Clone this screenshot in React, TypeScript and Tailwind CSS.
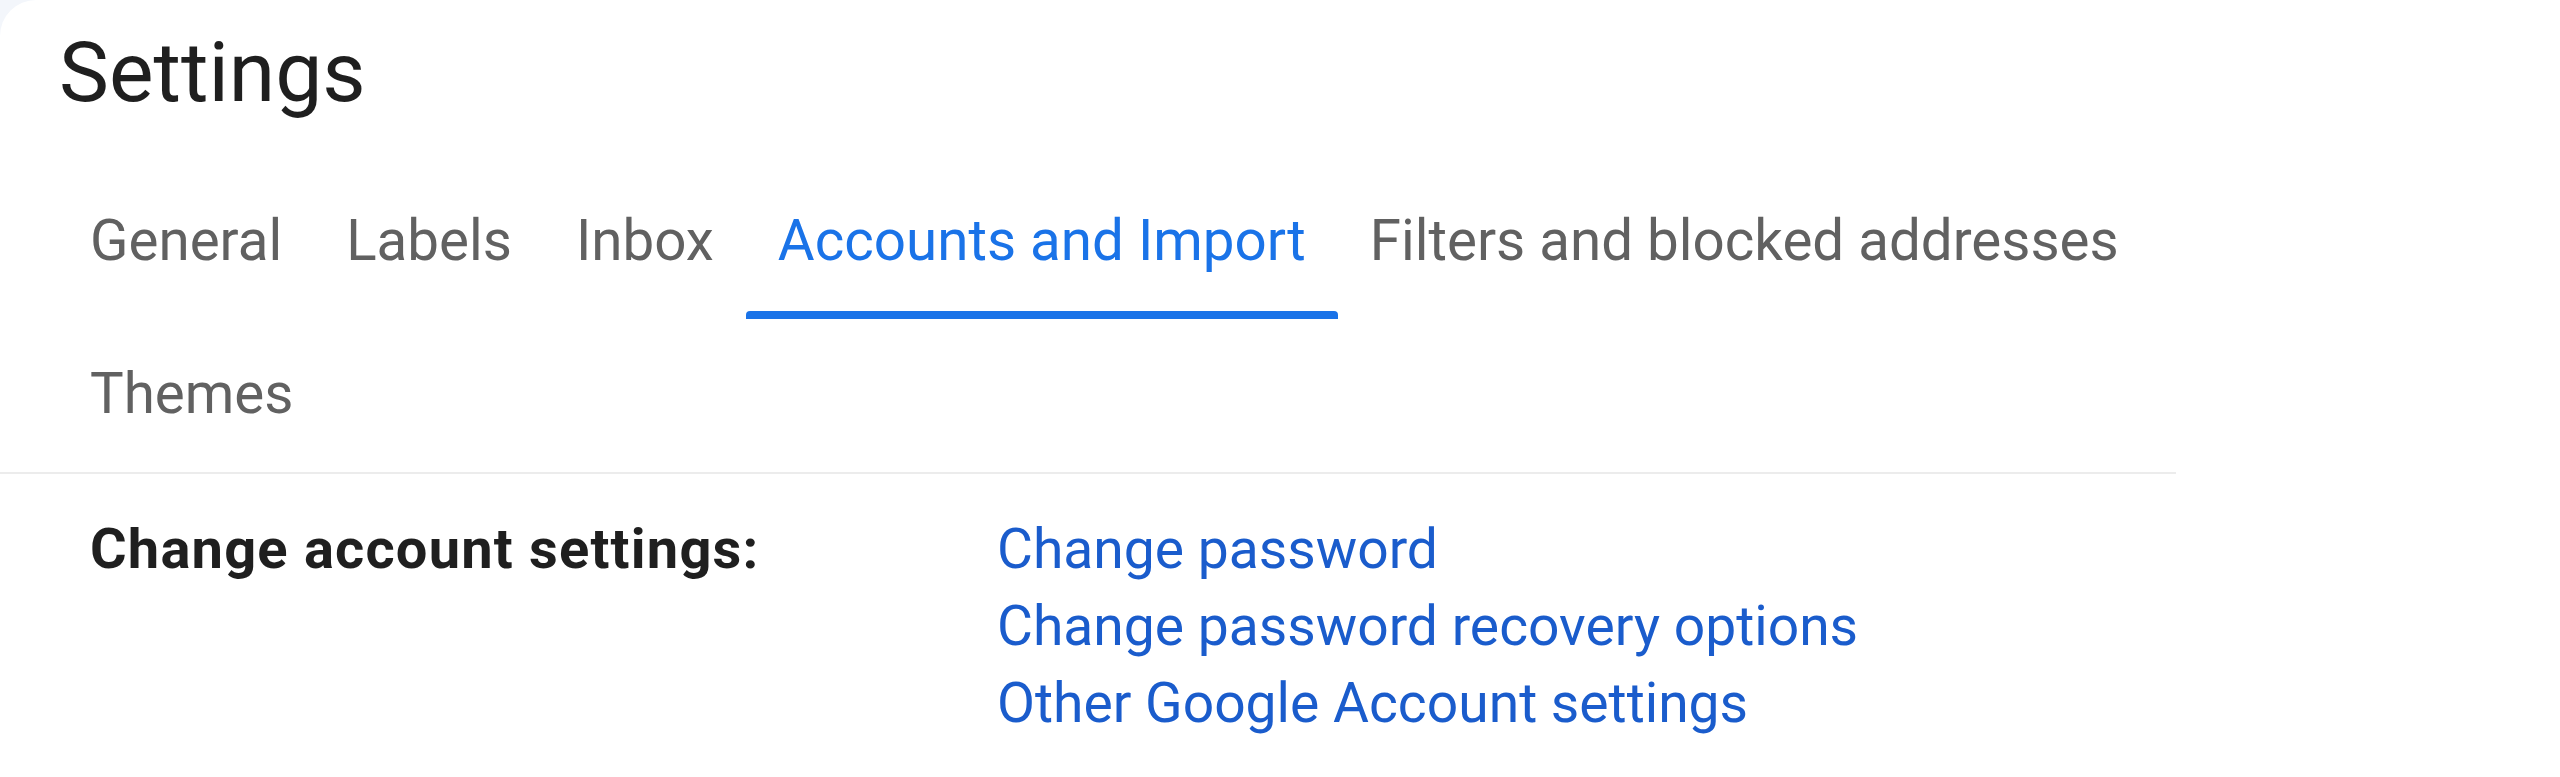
import React from 'react'

const tabRows = [
  ['General', 'Labels', 'Inbox', 'Accounts and Import', 'Filters and blocked addresses'],
  ['Themes'],
]

const links = [
  'Change password',
  'Change password recovery options',
  'Other Google Account settings',
]

export default function App() {
  return (
    <div className="min-h-[777px] w-[2560px] bg-[#f3f6fb] font-['Roboto',sans-serif]">
      <div className="min-h-[777px] bg-white rounded-tl-[36px]">
        {/* Header */}
        <h1 className="pt-[31px] pl-[59px] text-[84px] leading-none font-normal text-[#1f1f1f]">
          Settings
        </h1>

        {/* Tabs */}
        <div className="mt-[51px] w-[2176px] border-b-2 border-[#ececec]">
          {tabRows.map((row, i) => (
            <div key={i} className="flex pl-[58px]">
              {row.map((tab) => {
                const active = tab === 'Accounts and Import'
                return (
                  <div
                    key={tab}
                    className={
                      'relative flex h-[153px] items-center px-[32px] pb-[2px] text-[56.5px] leading-none ' +
                      (active ? 'text-[#1a73e8]' : 'text-[#616161]')
                    }
                  >
                    {tab}
                    {active && (
                      <span className="absolute bottom-0 left-0 right-0 h-[8px] rounded-t-[4px] bg-[#1a73e8]" />
                    )}
                  </div>
                )
              })}
            </div>
          ))}
        </div>

        {/* Account settings */}
        <div className="flex pt-[37px] pl-[90px] text-[56px] leading-[77px]">
          <div className="w-[907px] font-bold tracking-[1.2px] text-[#1f1f1f]">Change account settings:</div>
          <div className="flex flex-col text-[55.2px] text-[#1a5ccc]">
            {links.map((l) => (
              <a key={l} href="#" className="hover:underline">
                {l}
              </a>
            ))}
          </div>
        </div>
      </div>
    </div>
  )
}
